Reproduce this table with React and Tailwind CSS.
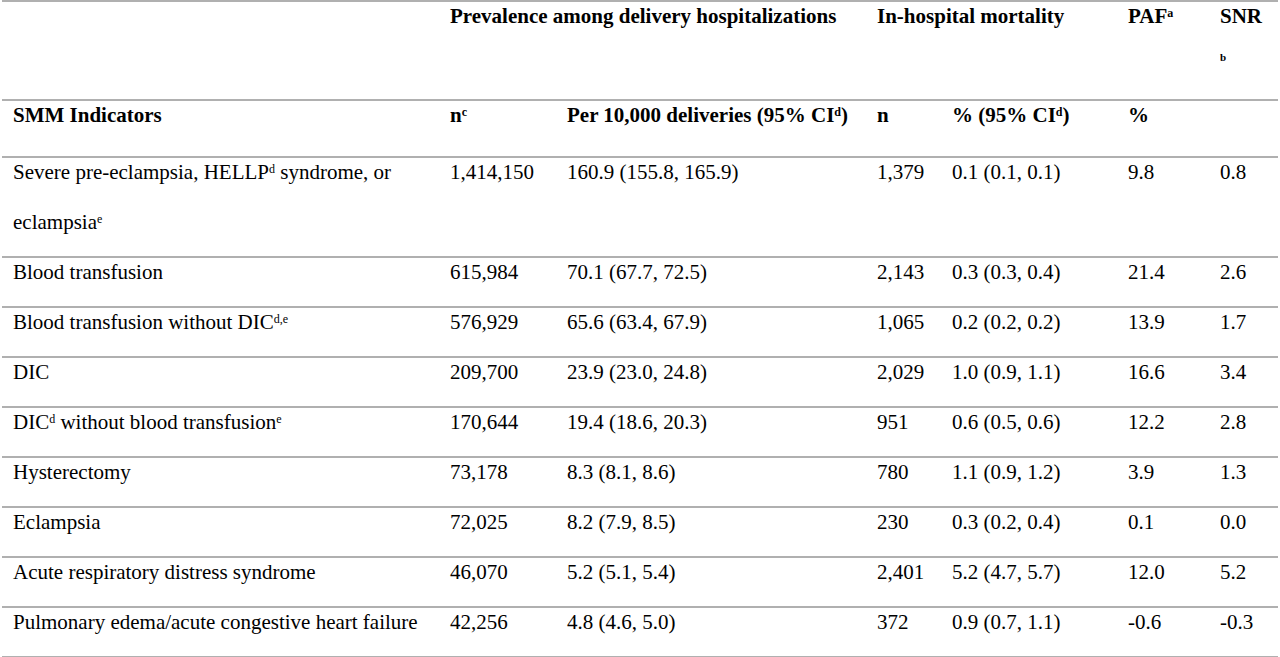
import React from "react";

const Sup = ({ children }) => (
  <sup className="text-[12px]">{children}</sup>
);

const rows = [
  {
    name: (
      <>
        <div className="h-[50px]">
          Severe pre-eclampsia, HELLP<Sup>d</Sup> syndrome, or
        </div>
        <div>
          eclampsia<Sup>e</Sup>
        </div>
      </>
    ),
    h: "h-[100px]",
    v: ["1,414,150", "160.9 (155.8, 165.9)", "1,379", "0.1 (0.1, 0.1)", "9.8", "0.8"],
  },
  { name: "Blood transfusion", v: ["615,984", "70.1 (67.7, 72.5)", "2,143", "0.3 (0.3, 0.4)", "21.4", "2.6"] },
  {
    name: (
      <>
        Blood transfusion without DIC<Sup>d,e</Sup>
      </>
    ),
    v: ["576,929", "65.6 (63.4, 67.9)", "1,065", "0.2 (0.2, 0.2)", "13.9", "1.7"],
  },
  { name: "DIC", v: ["209,700", "23.9 (23.0, 24.8)", "2,029", "1.0 (0.9, 1.1)", "16.6", "3.4"] },
  {
    name: (
      <>
        DIC<Sup>d</Sup> without blood transfusion<Sup>e</Sup>
      </>
    ),
    v: ["170,644", "19.4 (18.6, 20.3)", "951", "0.6 (0.5, 0.6)", "12.2", "2.8"],
  },
  { name: "Hysterectomy", v: ["73,178", "8.3 (8.1, 8.6)", "780", "1.1 (0.9, 1.2)", "3.9", "1.3"] },
  { name: "Eclampsia", v: ["72,025", "8.2 (7.9, 8.5)", "230", "0.3 (0.2, 0.4)", "0.1", "0.0"] },
  { name: "Acute respiratory distress syndrome", v: ["46,070", "5.2 (5.1, 5.4)", "2,401", "5.2 (4.7, 5.7)", "12.0", "5.2"] },
  {
    name: "Pulmonary edema/acute congestive heart failure",
    v: ["42,256", "4.8 (4.6, 5.0)", "372", "0.9 (0.7, 1.1)", "-0.6", "-0.3"],
  },
];

const grid =
  "grid grid-cols-[448px_117px_310px_75px_176px_92px_1fr] border-t-2 border-[#b0b0b0]";

export default function App() {
  return (
    <div
      className="w-[1280px] h-[657px] bg-white text-black text-[21px] leading-[28px] px-[2px] overflow-hidden"
      style={{ fontFamily: '"Liberation Serif", "Times New Roman", serif' }}
    >
      {/* header row 1 */}
      <div className={`${grid} h-[99px] font-bold`}>
        <div className="pl-[11px]"></div>
        <div className="col-span-2 whitespace-nowrap">
          Prevalence among delivery hospitalizations
        </div>
        <div className="col-span-2 whitespace-nowrap">In-hospital mortality</div>
        <div className="whitespace-nowrap">
          PAF<Sup>a</Sup>
        </div>
        <div className="whitespace-nowrap">
          <div className="h-[43px]">SNR</div>
          <div>
            <sup className="text-[11px]">b</sup>
          </div>
        </div>
      </div>
      {/* header row 2 */}
      <div className={`${grid} h-[57px] font-bold`}>
        <div className="pl-[11px] whitespace-nowrap">SMM Indicators</div>
        <div className="whitespace-nowrap">
          n<Sup>c</Sup>
        </div>
        <div className="whitespace-nowrap">
          Per 10,000 deliveries (95% CI<Sup>d</Sup>)
        </div>
        <div>n</div>
        <div className="whitespace-nowrap">
          % (95% CI<Sup>d</Sup>)
        </div>
        <div>%</div>
        <div></div>
      </div>
      {rows.map((r, i) => (
        <div key={i} className={`${grid} ${r.h || "h-[50px]"}`}>
          <div className="pl-[11px] whitespace-nowrap">{r.name}</div>
          {r.v.map((x, j) => (
            <div key={j} className="whitespace-nowrap">
              {x}
            </div>
          ))}
        </div>
      ))}
      <div className="border-t-2 border-[#b0b0b0]"></div>
    </div>
  );
}
